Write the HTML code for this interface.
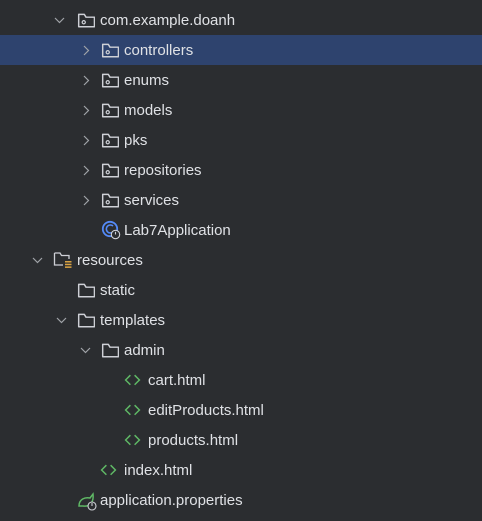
<!DOCTYPE html><html><head><style>
body{margin:0;width:482px;height:521px;background:#2b2d30;overflow:hidden;font-family:"Liberation Sans",sans-serif;font-size:15px;color:#dfe1e5;position:relative}
.r{position:absolute;left:0;width:482px;height:30px}
.sel{background:#2e436e}
.t{position:absolute;top:7px;line-height:18px}
svg{position:absolute}
</style></head><body>
<svg width="0" height="0"><defs>
<g id="fold"><path d="M1.5 3 V14 H15.5 V5.5 H8 L6.5 3 Z" fill="none" stroke="#ced0d6" stroke-width="1.3" stroke-linejoin="round"/></g>
<g id="pkg"><use href="#fold"/><circle cx="6" cy="10" r="1.4" fill="none" stroke="#ced0d6" stroke-width="1.1"/></g>
<g id="rc"><path d="M4 2 L8.5 6.5 L4 11" fill="none" stroke="#a0a3a8" stroke-width="1.2"/></g>
<g id="dn"><path d="M1 4 L5.5 8.5 L10 4" fill="none" stroke="#a0a3a8" stroke-width="1.2"/></g>
<g id="ht"><path d="M6 3 L1.5 7.5 L6 12 M10 3 L14.5 7.5 L10 12" fill="none" stroke="#5fb865" stroke-width="1.4"/></g>
</defs></svg>

<div class="r" style="top:5px"><svg style="left:54px;top:9px" width="12" height="12"><use href="#dn"/></svg><svg style="left:77px;top:6px" width="18" height="18" viewBox="0 0 16 16"><use href="#pkg"/></svg><span class="t" style="left:100px">com.example.doanh</span></div>
<div class="r sel" style="top:35px"><svg style="left:80px;top:9px" width="12" height="12"><use href="#rc"/></svg><svg style="left:101px;top:6px" width="18" height="18" viewBox="0 0 16 16"><use href="#pkg"/></svg><span class="t" style="left:124px">controllers</span></div>
<div class="r" style="top:65px"><svg style="left:80px;top:9px" width="12" height="12"><use href="#rc"/></svg><svg style="left:101px;top:6px" width="18" height="18" viewBox="0 0 16 16"><use href="#pkg"/></svg><span class="t" style="left:124px">enums</span></div>
<div class="r" style="top:95px"><svg style="left:80px;top:9px" width="12" height="12"><use href="#rc"/></svg><svg style="left:101px;top:6px" width="18" height="18" viewBox="0 0 16 16"><use href="#pkg"/></svg><span class="t" style="left:124px">models</span></div>
<div class="r" style="top:125px"><svg style="left:80px;top:9px" width="12" height="12"><use href="#rc"/></svg><svg style="left:101px;top:6px" width="18" height="18" viewBox="0 0 16 16"><use href="#pkg"/></svg><span class="t" style="left:124px">pks</span></div>
<div class="r" style="top:155px"><svg style="left:80px;top:9px" width="12" height="12"><use href="#rc"/></svg><svg style="left:101px;top:6px" width="18" height="18" viewBox="0 0 16 16"><use href="#pkg"/></svg><span class="t" style="left:124px">repositories</span></div>
<div class="r" style="top:185px"><svg style="left:80px;top:9px" width="12" height="12"><use href="#rc"/></svg><svg style="left:101px;top:6px" width="18" height="18" viewBox="0 0 16 16"><use href="#pkg"/></svg><span class="t" style="left:124px">services</span></div>
<div class="r" style="top:215px"><svg style="left:101px;top:5px" width="22" height="22"><circle cx="9" cy="9" r="7.2" fill="none" stroke="#548af7" stroke-width="1.8"/><path d="M12 6 A4 4 0 1 0 12 12" fill="none" stroke="#548af7" stroke-width="1.6"/><circle cx="14.5" cy="14.5" r="4.2" fill="#2b2d30" stroke="#ced0d6" stroke-width="1.1"/><path d="M14.5 11.8 V14.5" stroke="#ced0d6" stroke-width="1.1"/></svg><span class="t" style="left:124px">Lab7Application</span></div>
<div class="r" style="top:245px"><svg style="left:32px;top:9px" width="12" height="12"><use href="#dn"/></svg><svg style="left:53px;top:5px" width="20" height="20"><path d="M1.5 3 V15 H10 M1.5 3 L7 3 L8.5 5.5 H16 V9" fill="none" stroke="#ced0d6" stroke-width="1.3"/><rect x="12" y="11" width="6.5" height="1.5" fill="#d9a343"/><rect x="12" y="13.7" width="6.5" height="1.5" fill="#d9a343"/><rect x="12" y="16.4" width="6.5" height="1.5" fill="#d9a343"/></svg><span class="t" style="left:77px">resources</span></div>
<div class="r" style="top:275px"><svg style="left:77px;top:6px" width="18" height="18" viewBox="0 0 16 16"><use href="#fold"/></svg><span class="t" style="left:100px">static</span></div>
<div class="r" style="top:305px"><svg style="left:56px;top:9px" width="12" height="12"><use href="#dn"/></svg><svg style="left:77px;top:6px" width="18" height="18" viewBox="0 0 16 16"><use href="#fold"/></svg><span class="t" style="left:100px">templates</span></div>
<div class="r" style="top:335px"><svg style="left:80px;top:9px" width="12" height="12"><use href="#dn"/></svg><svg style="left:101px;top:6px" width="18" height="18" viewBox="0 0 16 16"><use href="#fold"/></svg><span class="t" style="left:124px">admin</span></div>
<div class="r" style="top:365px"><svg style="left:124px;top:7px" width="17" height="17" viewBox="0 0 16 16"><use href="#ht"/></svg><span class="t" style="left:148px">cart.html</span></div>
<div class="r" style="top:395px"><svg style="left:124px;top:7px" width="17" height="17" viewBox="0 0 16 16"><use href="#ht"/></svg><span class="t" style="left:148px">editProducts.html</span></div>
<div class="r" style="top:425px"><svg style="left:124px;top:7px" width="17" height="17" viewBox="0 0 16 16"><use href="#ht"/></svg><span class="t" style="left:148px">products.html</span></div>
<div class="r" style="top:455px"><svg style="left:100px;top:7px" width="17" height="17" viewBox="0 0 16 16"><use href="#ht"/></svg><span class="t" style="left:124px">index.html</span></div>
<div class="r" style="top:485px"><svg style="left:77px;top:4px" width="22" height="22"><path d="M2 17 C2 10 8 8 13 9 L16 5 C17 13 13 18 6 17 Z" fill="none" stroke="#5fb865" stroke-width="1.5"/><circle cx="15" cy="17" r="4" fill="#2b2d30" stroke="#ced0d6" stroke-width="1.1"/><path d="M15 14 V17" stroke="#ced0d6" stroke-width="1.1"/></svg><span class="t" style="left:100px">application.properties</span></div>
</body></html>
